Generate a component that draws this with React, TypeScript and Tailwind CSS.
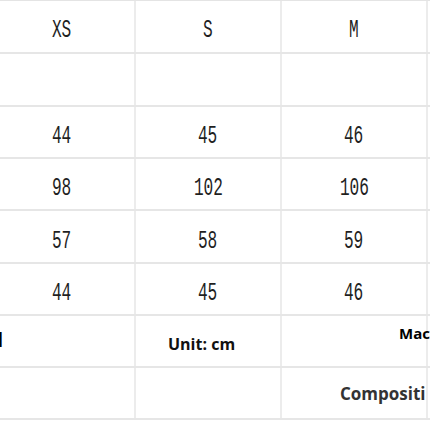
import React from "react";

const sizeRows: string[][] = [
  ["44", "45", "46"],
  ["98", "102", "106"],
  ["57", "58", "59"],
  ["44", "45", "46"],
];

function Mono({ children }: { children: React.ReactNode }) {
  return (
    <span className="inline-block scale-x-[0.62] font-['Liberation_Mono',monospace] text-[26px] leading-none text-[#1f1f1f]">
      {children}
    </span>
  );
}

function Cell({ children, head }: { children?: React.ReactNode; head?: boolean }) {
  return (
    <div
      className={
        head
          ? "w-[146px] shrink-0 h-full flex items-center justify-center pt-[6px] border-r-2 border-[#ececec]"
          : "w-[146px] shrink-0 h-full flex items-center justify-center pt-[8px] border-r-2 border-[#ececec]"
      }
    >
      {children}
    </div>
  );
}

export default function App() {
  return (
    <div className="w-[430px] h-[430px] overflow-hidden bg-white">
      <div className="-ml-[10px] w-[600px] border-t border-[#e4e4e4]">
        {/* header */}
        <div className="flex h-[53px] border-b-2 border-[#e6e6e6]">
          <Cell head><Mono>XS</Mono></Cell>
          <Cell head><Mono>S</Mono></Cell>
          <Cell head><Mono>M</Mono></Cell>
          <div className="w-[146px] shrink-0" />
        </div>

        {/* empty row */}
        <div className="flex h-[53px] border-b-2 border-[#e6e6e6]">
          <Cell />
          <Cell />
          <Cell />
          <div className="w-[146px] shrink-0" />
        </div>

        {sizeRows.map((row, i) => (
          <div
            key={i}
            className={
              i === 2
                ? "flex h-[53px] border-b-2 border-[#e6e6e6]"
                : "flex h-[52px] border-b-2 border-[#e6e6e6]"
            }
          >
            {row.map((v, j) => (
              <Cell key={j}>
                <Mono>{v}</Mono>
              </Cell>
            ))}
            <div className="w-[146px] shrink-0" />
          </div>
        ))}

        {/* unit row */}
        <div className="flex h-[52px] border-b-2 border-[#e6e6e6] font-['Open_Sans',sans-serif] font-bold">
          <div className="w-[146px] shrink-0 h-full border-r-2 border-[#ececec] pt-[10px]">
            <div className="w-[13px] flex justify-end whitespace-nowrap text-[19px] text-black">
              Model
            </div>
          </div>
          <div className="w-[146px] shrink-0 h-full border-r-2 border-[#ececec] pl-[32px] pt-[16px] text-[16px] text-[#111]">
            Unit: cm
          </div>
          <div className="w-[146px] shrink-0 h-full border-r-2 border-[#ececec] pl-[117px] pt-[6px] whitespace-nowrap text-[15px] text-black">
            Mach
          </div>
          <div className="w-[146px] shrink-0 h-full" />
        </div>

        {/* composition row */}
        <div className="flex h-[52px] border-b-2 border-[#e6e6e6] font-['Open_Sans',sans-serif] font-bold">
          <div className="w-[146px] shrink-0 h-full border-r-2 border-[#ececec]" />
          <div className="w-[146px] shrink-0 h-full border-r-2 border-[#ececec]" />
          <div className="w-[146px] shrink-0 h-full border-r-2 border-[#ececec] pl-[58px] pt-[13px] whitespace-nowrap text-[17px] text-[#333]">
            Compositi
          </div>
          <div className="w-[146px] shrink-0 h-full" />
        </div>
      </div>
    </div>
  );
}
